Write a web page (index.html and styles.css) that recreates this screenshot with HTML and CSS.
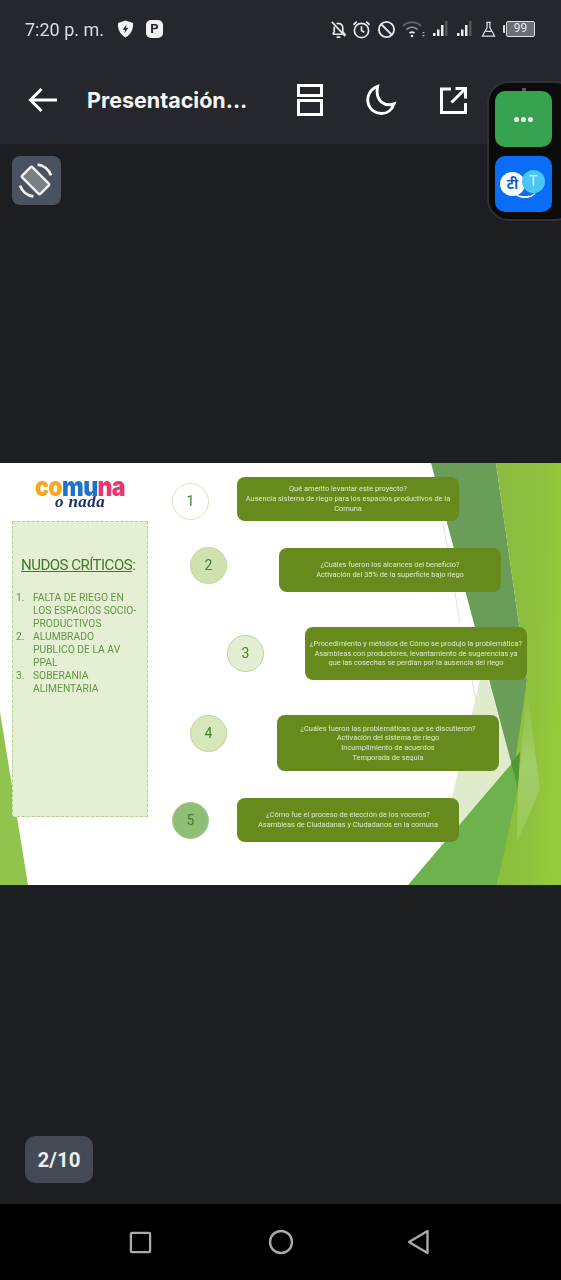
FILE: index.html
```html
<!DOCTYPE html>
<html lang="es">
<head>
<meta charset="utf-8">
<title>Presentación</title>
<link rel="stylesheet" href="styles.css">
</head>
<body>
<div class="screen">
  <header class="top">
    <div class="status">
      <span class="time">7:20 p. m.</span>
      <svg class="ic-shield" viewBox="0 0 16 18"><path d="M8 0.5 15.500 3C16 9 13.500 14.500 8 17.500 2.500 14.500 0 9 .5 3Z" fill="#f2f2f2"/><path d="M9.200 4 5.200 9.800H7.800L6.800 13.500 10.800 7.800H8.200Z" fill="#25272c"/></svg>
      <span class="ic-p">P</span>
      <span class="status-right">
        <svg class="s20 i-bell" viewBox="0 0 20 20" fill="none" stroke="#e6e6e6" stroke-width="1.800"><path d="M4 15h12.500l-2-2.500V8a4.500 4.500 0 0 0-6.500-4M5.500 7v5.500L4 15M8 18h4M3 2l14 15"/></svg>
        <svg class="s20 i-alarm" viewBox="0 0 20 20" fill="none" stroke="#e6e6e6" stroke-width="1.800"><circle cx="10" cy="11" r="7.500"/><path d="M10 6.500V11l3 2M1.500 5 5 1.800M18.500 5 15 1.800"/></svg>
        <svg class="s20 i-ban" viewBox="0 0 20 20" fill="none" stroke="#e6e6e6" stroke-width="2"><circle cx="10" cy="10" r="8"/><path d="M4.500 4.500l11 11"/></svg>
        <svg class="wifi" viewBox="0 0 24 20" fill="none" stroke-width="1.800"><path d="M2 7c5-5 13-5 18 0" stroke="#5b5e62"/><path d="M5.500 10.500c3.500-3 7.500-3 11 0" stroke="#8b8d90"/><path d="M8.500 14c1.800-1.300 3.200-1.300 5 0" stroke="#e6e6e6"/><circle cx="11" cy="17" r="1.300" fill="#e6e6e6"/><path d="M22.500 13v1.300M22.500 16v1.300" stroke="#bbb"/></svg>
        <svg class="sig" viewBox="0 0 16 18"><path d="M1 13h2.500v3H1zM5 9.500h2.500V16H5zM9 5h2.500v11H9z" fill="#eee"/><path d="M13 1h2.500v15H13z" fill="#55585c"/></svg>
        <svg class="sig sig2" viewBox="0 0 16 18"><path d="M1 13h2.500v3H1zM5 9.500h2.500V16H5zM9 5h2.500v11H9z" fill="#eee"/><path d="M13 1h2.500v15H13z" fill="#55585c"/></svg>
        <svg class="flask" viewBox="0 0 16 18" fill="none" stroke="#dcdcdc" stroke-width="1.300"><path d="M5.500 1.500h5M6.500 1.500V7L1.500 16h13L9.500 7V1.500M5 11h6"/></svg>
        <span class="battery"><span class="bat-tip"></span><span class="bat-body">99</span></span>
      </span>
    </div>
    <div class="toolbar">
      <svg class="back" viewBox="0 0 30 26" fill="none" stroke="#fff" stroke-width="3"><path d="M29 13H3M13.500 2 2.500 13l11 11"/></svg>
      <span class="title">Presentación...</span>
      <svg class="tool t-split" viewBox="0 0 26 32" fill="none" stroke="#fff" stroke-width="3"><path d="M1.500 1.500h23v10h-23zM1.500 16.500h23v14h-23z"/></svg>
      <svg class="tool t-moon" viewBox="0 0 32 32" fill="none" stroke="#fff" stroke-width="3"><path d="M12 2C4 5 1 12 2 18 3 26 10 30 16 30 22 30 27 26 29 20 20 23 9 18 12 2Z"/></svg>
      <svg class="tool t-open" viewBox="0 0 27 27" fill="none" stroke="#fff" stroke-width="3"><path d="M11 2H1.500v23.500h24V16M15.500 1.500h10v10M25 2 11.500 15.500"/></svg>
    </div>
  </header>

  <main class="viewer">
    <section class="slide">
      <svg class="slide-bg" viewBox="0 0 561 422" preserveAspectRatio="none">
        <defs>
          <linearGradient id="bright" x1="0" x2="1" y1="0" y2="0.3">
            <stop offset="0" stop-color="#89bb40"/>
            <stop offset=".7" stop-color="#8ec13c"/>
            <stop offset="1" stop-color="#95ca3c"/>
          </linearGradient>
          <linearGradient id="band" x1="0" x2="0" y1="0" y2="1">
            <stop offset="0" stop-color="#8fc043"/>
            <stop offset=".5" stop-color="#a2cd68"/>
            <stop offset="1" stop-color="#98c956"/>
          </linearGradient>
        </defs>
        <path d="M0 249 28 422H0Z" fill="#90c44c"/>
        <path d="M443 60 460 160M472 217 478 247" stroke="#dfe2db" fill="none"/>
        <path d="M480 217 488 217 512 300 440 384Z" fill="#dfebca"/>
        <path d="M431 0H496L527 217 518 325Z" fill="#6a9e58"/>
        <path d="M496 0H561V422H497L527 217Z" fill="url(#bright)"/>
        <path d="M408 422 512 300 520 289 518 325 497 422Z" fill="#6db24c"/>
        <path d="M520 289 511 300 518 325Z" fill="#4f9a35"/>
        <path d="M527 225 540 327 517 379 518 325Z" fill="url(#band)"/>
      </svg>

      <div class="logo">
        <div class="logo-main"><span class="c-o">co</span><span class="c-b">mu</span><span class="c-p">na</span></div>
        <div class="logo-sub">o nada</div>
      </div>

      <aside class="panel">
        <h2 class="panel-title"><span>NUDOS CRÍTICOS</span>:</h2>
        <ol class="panel-list">
          <li>FALTA DE RIEGO EN LOS ESPACIOS SOCIO-PRODUCTIVOS</li>
          <li>ALUMBRADO PUBLICO DE LA AV PPAL</li>
          <li>SOBERANIA ALIMENTARIA</li>
        </ol>
      </aside>

      <div class="dot d1">1</div>
      <div class="card c1"><p>Qué amerito levantar este proyecto?</p><p>Ausencia sistema de riego para los espacios productivos de la Comuna</p></div>
      <div class="dot d2">2</div>
      <div class="card c2"><p>¿Cuáles fueron los alcances del beneficio?</p><p>Activación del 35% de la superficie bajo riego</p></div>
      <div class="dot d3">3</div>
      <div class="card c3"><p>¿Procedimiento y métodos de Cómo se produjo la problemática?</p><p>Asambleas con productores, levantamiento de sugerencias ya que las cosechas se perdían por la ausencia del riego</p></div>
      <div class="dot d4">4</div>
      <div class="card c4"><p>¿Cuáles fueron las problemáticas que se discutieron?</p><p>Activación del sistema de riego</p><p>Incumplimiento de acuerdos</p><p>Temporada de sequía</p></div>
      <div class="dot d5">5</div>
      <div class="card c5"><p>¿Cómo fue el proceso de elección de los voceros?</p><p>Asambleas de Ciudadanas y Ciudadanos en la comuna</p></div>
    </section>

    <button class="rotate" type="button" aria-label="Girar">
      <svg viewBox="0 0 38 38" fill="none" stroke="#f1f1f1" stroke-width="2.400"><rect x="-7" y="-12.500" width="14" height="25" rx="1.500" transform="translate(19 19) rotate(-45)" fill="#7b7f86"/><path d="M21 3.500A15.500 15.500 0 0 1 34 14M17 34.500A15.500 15.500 0 0 1 4 24" stroke-width="2.800"/></svg>
    </button>
    <div class="pager">2/10</div>
  </main>

  <nav class="navbar">
    <svg class="nav-ic" viewBox="0 0 24 24" fill="none" stroke="#a9a9a9" stroke-width="2.400"><rect x="2" y="2" width="20" height="20" rx="1"/></svg>
    <svg class="nav-ic" viewBox="0 0 26 26" fill="none" stroke="#a9a9a9" stroke-width="2.400"><circle cx="13" cy="13" r="11"/></svg>
    <svg class="nav-ic" viewBox="0 0 24 26" fill="none" stroke="#a9a9a9" stroke-width="2.400" stroke-linejoin="round"><path d="M20.500 2 2 13l18.500 11Z"/></svg>
  </nav>

  <div class="float">
    <div class="tile tile-green"><i></i><i></i><i></i></div>
    <div class="tile tile-blue">
      <span class="bub-tail"></span>
      <span class="bub bub-w">टी</span>
      <span class="bub bub-c">T</span>
    </div>
  </div>
</div>
</body>
</html>
```
FILE: styles.css
```css
* { box-sizing: border-box; }
html, body { margin: 0; padding: 0; background: #1c1e21; }
.screen {
  position: relative;
  width: 561px;
  height: 1280px;
  display: flex;
  flex-direction: column;
  overflow: hidden;
  font-family: Roboto, "Liberation Sans", sans-serif;
}

/* header */
.top { height: 144px; background: #25272c; flex: none; }
.status {
  height: 58px;
  padding: 0 26px 0 25px;
  display: flex;
  align-items: center;
  color: #dcdcdc;
  filter: blur(.3px);
}
.time { font-size: 18px; width: 92px; white-space: nowrap; }
.ic-shield { width: 17px; height: 18px; }
.ic-p {
  margin-left: 12px;
  width: 17px;
  height: 18px;
  background: #f2f2f2;
  color: #25272c;
  border-radius: 5px;
  font: 700 13px/18px Roboto, sans-serif;
  text-align: center;
}
.status-right { margin-left: auto; display: flex; align-items: center; }
.s20 { width: 19px; height: 19px; }
.i-alarm { margin-left: 4px; }
.i-ban { margin-left: 6px; }
.wifi { width: 24px; height: 20px; margin-left: 5px; }
.sig { width: 16px; height: 18px; margin-left: 7px; }
.sig2 { margin-left: 8px; }
.flask { width: 15px; height: 17px; margin-left: 9px; }
.battery { display: flex; align-items: center; margin-left: 7px; }
.bat-tip { width: 2px; height: 8px; background: #ddd; border-radius: 1px 0 0 1px; margin-right: 1px; }
.bat-body {
  width: 29px;
  height: 16px;
  border: 1.500px solid #dedede;
  background: #6d6f72;
  border-radius: 2px;
  color: #e4e4e4;
  font-size: 12px;
  line-height: 13px;
  text-align: center;
}
.toolbar { height: 86px; display: flex; align-items: center; padding-left: 28px; margin-top: -1px; }
.back { width: 30px; height: 26px; flex: none; }
.title {
  margin-left: 29px;
  width: 161px;
  font-family: Inter, "Open Sans", sans-serif;
  font-size: 21.500px;
  font-weight: 700;
  color: #f6f6f6;
  white-space: nowrap;
}
.tool { flex: none; }
.t-split { width: 26px; height: 32px; margin-left: 49px; }
.t-moon { width: 31px; height: 32px; margin-left: 43px; }
.t-open { width: 27px; height: 27px; margin-left: 43px; }

/* viewer */
.viewer {
  position: relative;
  flex: 1;
  background: #1c1e21;
  display: flex;
  flex-direction: column;
  justify-content: center;
}
.rotate {
  position: absolute;
  left: 12px;
  top: 12px;
  width: 49px;
  height: 49px;
  padding: 5px 6px 5px 4px;
  border: 0;
  border-radius: 8px;
  background: #4a5260;
}
.rotate svg { display: block; width: 39px; height: 39px; }
.pager {
  position: absolute;
  left: 25px;
  bottom: 21px;
  width: 68px;
  height: 47px;
  border-radius: 10px;
  background: #444a55;
  color: #ececec;
  font-size: 20.500px;
  font-weight: 700;
  line-height: 48px;
  text-align: center;
}

/* slide: a free canvas */
.slide {
  position: relative;
  width: 561px;
  height: 422px;
  background: #fff;
  overflow: hidden;
  filter: blur(.5px);
}
.slide-bg { position: absolute; inset: 0; width: 100%; height: 100%; display: block; }
.logo { position: absolute; left: 24px; top: 16px; width: 112px; text-align: center; }
.logo-main {
  font-family: Inter, Roboto, sans-serif;
  font-weight: 900;
  font-size: 23px;
  line-height: 16px;
  letter-spacing: -.6px;
  transform: scaleY(1.15);
}
.c-o { color: #f5a91f; }
.c-b { color: #1f72c9; }
.c-p { color: #e8386f; }
.logo-sub {
  margin-top: 0;
  font-family: "Liberation Serif", serif;
  font-style: italic;
  font-weight: 700;
  font-size: 17px;
  line-height: 13px;
  letter-spacing: .4px;
  color: #1d2f6b;
}
.panel {
  position: absolute;
  left: 12px;
  top: 58px;
  width: 136px;
  height: 296px;
  background: #e4efd4;
  border: 1px dashed #afcf8d;
  padding: 34px 0 0;
}
.panel-title {
  margin: 0 0 0 8px;
  font-size: 15px;
  line-height: 18px;
  font-weight: 400;
  color: #3e7a25;
  white-space: nowrap;
  letter-spacing: -.5px;
}
.panel-title span { text-decoration: underline; }
.panel-list {
  margin: 17px 0 0;
  padding: 0 10px 0 3px;
  list-style: none;
  counter-reset: item;
  font-size: 10.300px;
  line-height: 13px;
  color: #639646;
}
.panel-list li { display: flex; counter-increment: item; }
.panel-list li::before { content: counter(item) "."; flex: none; width: 17px; }
.dot {
  position: absolute;
  width: 37px;
  height: 37px;
  border-radius: 50%;
  border: 1px solid #bcd59a;
  color: #437f28;
  font-size: 14px;
  line-height: 34px;
  text-align: center;
}
.d1 { left: 172px; top: 20px; background: #fff; border-color: #d8e3b9; }
.d2 { left: 190px; top: 84px; background: #cfe2ae; }
.d3 { left: 227px; top: 172px; background: #e3eed3; }
.d4 { left: 190px; top: 252px; background: #d6e7ba; }
.d5 { left: 172px; top: 339px; background: #8fbf77; border-color: #a5cb8c; }
.card {
  position: absolute;
  width: 222px;
  padding: 0 5px;
  border-radius: 8px;
  background: #668b1c;
  color: #dfe8cd;
  font-size: 7.400px;
  line-height: 9.700px;
  text-align: center;
  display: flex;
  flex-direction: column;
  justify-content: center;
}
.card p { margin: 0; }
.c1 { left: 237px; top: 14px; height: 44px; }
.c2 { left: 279px; top: 85px; height: 44px; }
.c3 { left: 305px; top: 164px; height: 53px; }
.c4 { left: 277px; top: 252px; height: 56px; }
.c5 { left: 237px; top: 335px; height: 44px; }

/* nav */
.navbar {
  position: relative;
  flex: none;
  height: 76px;
  background: #000;
}
.nav-ic { position: absolute; }
.nav-ic:nth-child(1) { left: 129px; top: 27px; width: 23px; height: 23px; }
.nav-ic:nth-child(2) { left: 268px; top: 25px; width: 26px; height: 26px; }
.nav-ic:nth-child(3) { left: 407px; top: 25px; width: 24px; height: 26px; }

/* floating panel */
.float {
  position: absolute;
  left: 487px;
  top: 81px;
  width: 90px;
  height: 140px;
  padding: 8px 0 0 6px;
  display: flex;
  flex-direction: column;
  gap: 9px;
  background: #0b0b0c;
  border: 2px solid #2e3035;
  border-radius: 22px;
  filter: blur(.3px);
}
.tile { width: 57px; height: 56px; border-radius: 10px; flex: none; position: relative; }
.tile-green {
  background: #37a350;
  display: flex;
  align-items: center;
  justify-content: center;
  gap: 2px;
}
.tile-green::before {
  content: "";
  position: absolute;
  left: 27px;
  top: -3px;
  width: 4px;
  height: 3px;
  background: #55585a;
}
.tile-green i { width: 5px; height: 5px; border-radius: 50%; background: #f3f3f3; }
.tile-blue { background: #0a6df5; }
.bub { position: absolute; border-radius: 50%; text-align: center; }
.bub-w {
  left: 5px;
  top: 16px;
  width: 25px;
  height: 24px;
  background: #fff;
  color: #0a5fd8;
  font: 700 14px/23px "Noto Sans", "DejaVu Sans", sans-serif;
}
.bub-c {
  left: 27px;
  top: 14px;
  width: 23px;
  height: 23px;
  background: #4cc7f5;
  color: #e8f7ff;
  font-size: 14px;
  line-height: 23px;
}
.bub-tail {
  position: absolute;
  left: 18px;
  top: 32px;
  width: 24px;
  height: 10px;
  border-bottom: 2px solid #fff;
  border-radius: 0 0 12px 12px;
}
```
